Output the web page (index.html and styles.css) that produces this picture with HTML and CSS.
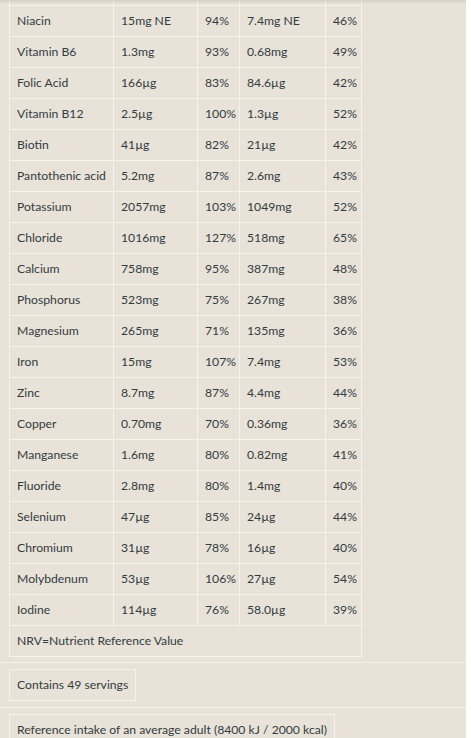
FILE: index.html
```html
<!DOCTYPE html>
<html>
<head>
<meta charset="utf-8">
<link rel="stylesheet" href="styles.css">
</head>
<body>
<div class="panel">
  <div class="block block-table">
    <table class="nut">
      <colgroup>
        <col class="c1"><col class="c2"><col class="c3"><col class="c4"><col class="c5">
      </colgroup>
      <tbody>
        <tr class="cut"><td></td><td></td><td></td><td></td><td></td></tr>
        <tr><td>Niacin</td><td>15mg NE</td><td>94%</td><td>7.4mg NE</td><td>46%</td></tr>
        <tr><td>Vitamin B6</td><td>1.3mg</td><td>93%</td><td>0.68mg</td><td>49%</td></tr>
        <tr><td>Folic Acid</td><td>166µg</td><td>83%</td><td>84.6µg</td><td>42%</td></tr>
        <tr><td>Vitamin B12</td><td>2.5µg</td><td>100%</td><td>1.3µg</td><td>52%</td></tr>
        <tr><td>Biotin</td><td>41µg</td><td>82%</td><td>21µg</td><td>42%</td></tr>
        <tr><td>Pantothenic acid</td><td>5.2mg</td><td>87%</td><td>2.6mg</td><td>43%</td></tr>
        <tr><td>Potassium</td><td>2057mg</td><td>103%</td><td>1049mg</td><td>52%</td></tr>
        <tr><td>Chloride</td><td>1016mg</td><td>127%</td><td>518mg</td><td>65%</td></tr>
        <tr><td>Calcium</td><td>758mg</td><td>95%</td><td>387mg</td><td>48%</td></tr>
        <tr><td>Phosphorus</td><td>523mg</td><td>75%</td><td>267mg</td><td>38%</td></tr>
        <tr><td>Magnesium</td><td>265mg</td><td>71%</td><td>135mg</td><td>36%</td></tr>
        <tr><td>Iron</td><td>15mg</td><td>107%</td><td>7.4mg</td><td>53%</td></tr>
        <tr><td>Zinc</td><td>8.7mg</td><td>87%</td><td>4.4mg</td><td>44%</td></tr>
        <tr><td>Copper</td><td>0.70mg</td><td>70%</td><td>0.36mg</td><td>36%</td></tr>
        <tr><td>Manganese</td><td>1.6mg</td><td>80%</td><td>0.82mg</td><td>41%</td></tr>
        <tr><td>Fluoride</td><td>2.8mg</td><td>80%</td><td>1.4mg</td><td>40%</td></tr>
        <tr><td>Selenium</td><td>47µg</td><td>85%</td><td>24µg</td><td>44%</td></tr>
        <tr><td>Chromium</td><td>31µg</td><td>78%</td><td>16µg</td><td>40%</td></tr>
        <tr><td>Molybdenum</td><td>53µg</td><td>106%</td><td>27µg</td><td>54%</td></tr>
        <tr><td>Iodine</td><td>114µg</td><td>76%</td><td>58.0µg</td><td>39%</td></tr>
        <tr><td colspan="5">NRV=Nutrient Reference Value</td></tr>
      </tbody>
    </table>
  </div>
  <div class="block">
    <table class="note"><tbody><tr><td>Contains 49 servings</td></tr></tbody></table>
  </div>
  <div class="block">
    <table class="note"><tbody><tr><td>Reference intake of an average adult (8400 kJ / 2000 kcal)</td></tr></tbody></table>
  </div>
</div>
<div class="topshadow"></div>
</body>
</html>
```
FILE: styles.css
```css
html, body {
  margin: 0;
  padding: 0;
  background: #ffffff;
  overflow: hidden;
}
body {
  font-family: Lato, "Liberation Sans", sans-serif;
  font-size: 12.2px;
  color: #323c3f;
}
.panel {
  width: 466px;
  background: #e8e2d9;
  min-height: 100vh;
}
.block {
  padding: 6px 8px 6px 9px;
  border-bottom: 1px solid #f6f1ea;
}
.block-table {
  padding-top: 0;
  padding-bottom: 5px;
}
table {
  border-collapse: collapse;
}
td {
  border: 1px solid #f6f2ec;
  padding: 6px 7px;
  line-height: 18px;
  white-space: nowrap;
  text-align: left;
}
.nut {
  table-layout: fixed;
  width: 352px;
}
.c1 { width: 104px; }
.c2 { width: 84px; }
.c3 { width: 42px; }
.c4 { width: 86px; }
.c5 { width: 36px; }
.nut td { padding: 6px 6px 6px 7px; }
.nut .cut td {
  border-top: none;
  padding: 0;
  height: 5px;
  line-height: 5px;
}
.topshadow {
  position: fixed;
  top: 0;
  left: 0;
  width: 466px;
  height: 4px;
  background: linear-gradient(to bottom, rgba(0,0,0,0.08), rgba(0,0,0,0));
}
```
